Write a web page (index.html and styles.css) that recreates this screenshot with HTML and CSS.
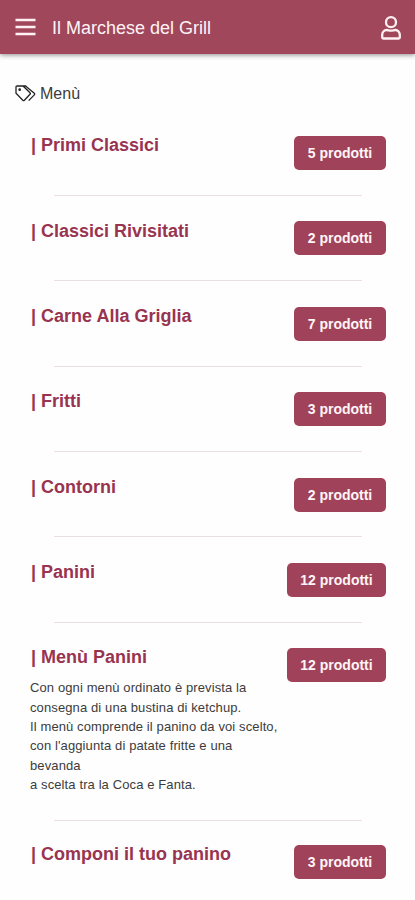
FILE: index.html
```html
<!DOCTYPE html>
<html lang="it">
<head>
<meta charset="utf-8">
<meta name="viewport" content="width=device-width, initial-scale=1">
<title>Il Marchese del Grill</title>
<link rel="stylesheet" href="styles.css">
</head>
<body>
<header class="topbar">
  <svg class="burger" viewBox="0 0 21 18" aria-hidden="true"><path d="M.5 2h20M.5 9h20M.5 16h20"/></svg>
  <h1 class="brand">Il Marchese del Grill</h1>
  <svg class="user" viewBox="0 0 20 24" aria-hidden="true"><circle cx="10" cy="6.200" r="5"/><path d="M5.800 14C3 14 1.200 16.300 1.200 18.800v2.200c0 .9.600 1.500 1.500 1.500h14.600c.9 0 1.500-.6 1.500-1.500v-2.200c0-2.500-1.800-4.800-4.600-4.800-1.400 0-2.200.6-4.200.6s-2.800-.6-4.200-.6z"/></svg>
</header>
<main>
  <h2 class="heading">
    <svg class="tags" viewBox="0 0 21 17" aria-hidden="true"><path d="M1 2.200Q1 1 2.200 1H8l7 6.700q.8.800 0 1.600l-5.600 5.900q-.8.800-1.600 0L1 8.300zM10.500 1l8.800 7.300q.8.800 0 1.600l-5.600 5.700M8.300 1h3"/><circle cx="4.700" cy="4.700" r=".7"/></svg>
    <span>Menù</span>
  </h2>
  <ul class="menu">
    <li class="item"><div class="info"><h3>| Primi Classici</h3></div><a class="count">5 prodotti</a></li>
    <li class="item"><div class="info"><h3>| Classici Rivisitati</h3></div><a class="count">2 prodotti</a></li>
    <li class="item"><div class="info"><h3>| Carne Alla Griglia</h3></div><a class="count">7 prodotti</a></li>
    <li class="item"><div class="info"><h3>| Fritti</h3></div><a class="count">3 prodotti</a></li>
    <li class="item"><div class="info"><h3>| Contorni</h3></div><a class="count">2 prodotti</a></li>
    <li class="item"><div class="info"><h3>| Panini</h3></div><a class="count wide">12 prodotti</a></li>
    <li class="item described"><div class="info"><h3>| Menù Panini</h3><p>Con ogni menù ordinato è prevista la<br>consegna di una bustina di ketchup.<br>Il menù comprende il panino da voi scelto,<br>con l'aggiunta di patate fritte e una<br>bevanda<br>a scelta tra la Coca e Fanta.</p></div><a class="count wide">12 prodotti</a></li>
    <li class="item"><div class="info"><h3>| Componi il tuo panino</h3></div><a class="count">3 prodotti</a></li>
  </ul>
</main>
</body>
</html>
```

FILE: styles.css
```css
* {
  box-sizing: border-box;
  margin: 0;
  padding: 0;
}

body {
  height: 900px;
  overflow: hidden;
  background: #fefefe;
  color: #3c3c3c;
  font-family: "Liberation Sans", Arial, sans-serif;
}

.topbar {
  display: flex;
  align-items: center;
  height: 54px;
  padding: 0 14px 0 15px;
  background: #a0475c;
  box-shadow: 0 1px 5px rgba(0, 0, 0, .45);
  color: #fff3f5;
}

.topbar svg {
  fill: none;
  stroke: #fff1f3;
}

.burger {
  width: 21px;
  height: 18px;
  stroke-width: 2.3;
}

.brand {
  flex: 1;
  margin: 2px 0 0 16px;
  font-size: 18px;
  font-weight: 400;
  line-height: 22px;
}

.user {
  width: 20px;
  height: 24px;
  margin-top: 1px;
  stroke-width: 2.3;
}

.heading {
  display: flex;
  align-items: center;
  gap: 4px;
  height: 20px;
  margin: 30px 0 32px 15px;
  font-size: 16px;
  font-weight: 400;
}

.tags {
  width: 21px;
  height: 17px;
  margin-top: -2px;
  fill: none;
  stroke: #222;
  stroke-width: 1.3;
}

.menu {
  list-style: none;
}

.item {
  display: grid;
  grid-template-columns: 1fr auto;
  grid-template-rows: 58.800px 1px;
  align-items: start;
  height: 85.400px;
  padding: 0 29px 0 31px;
}

.item::after {
  content: "";
  grid-column: 1 / -1;
  height: 1px;
  margin: 0 24px 0 23px;
  background: #eae0e3;
}

.item:last-child::after {
  display: none;
}

.described {
  grid-template-rows: 171.300px 1px;
  height: 197px;
}

.info {
  width: 0;
  margin-top: -.9px;
  white-space: nowrap;
}

h3 {
  color: #983450;
  font-size: 18px;
  font-weight: 700;
  line-height: 20px;
}

p {
  margin: 10.900px 0 0 -1px;
  font-size: 13px;
  letter-spacing: .11px;
  line-height: 19.300px;
}

.count {
  display: flex;
  align-items: center;
  justify-content: center;
  width: 92px;
  height: 34px;
  border-radius: 5px;
  background: #a0435a;
  color: #fff5f6;
  font-size: 14px;
  font-weight: 700;
}

.wide {
  width: 99px;
}
```
